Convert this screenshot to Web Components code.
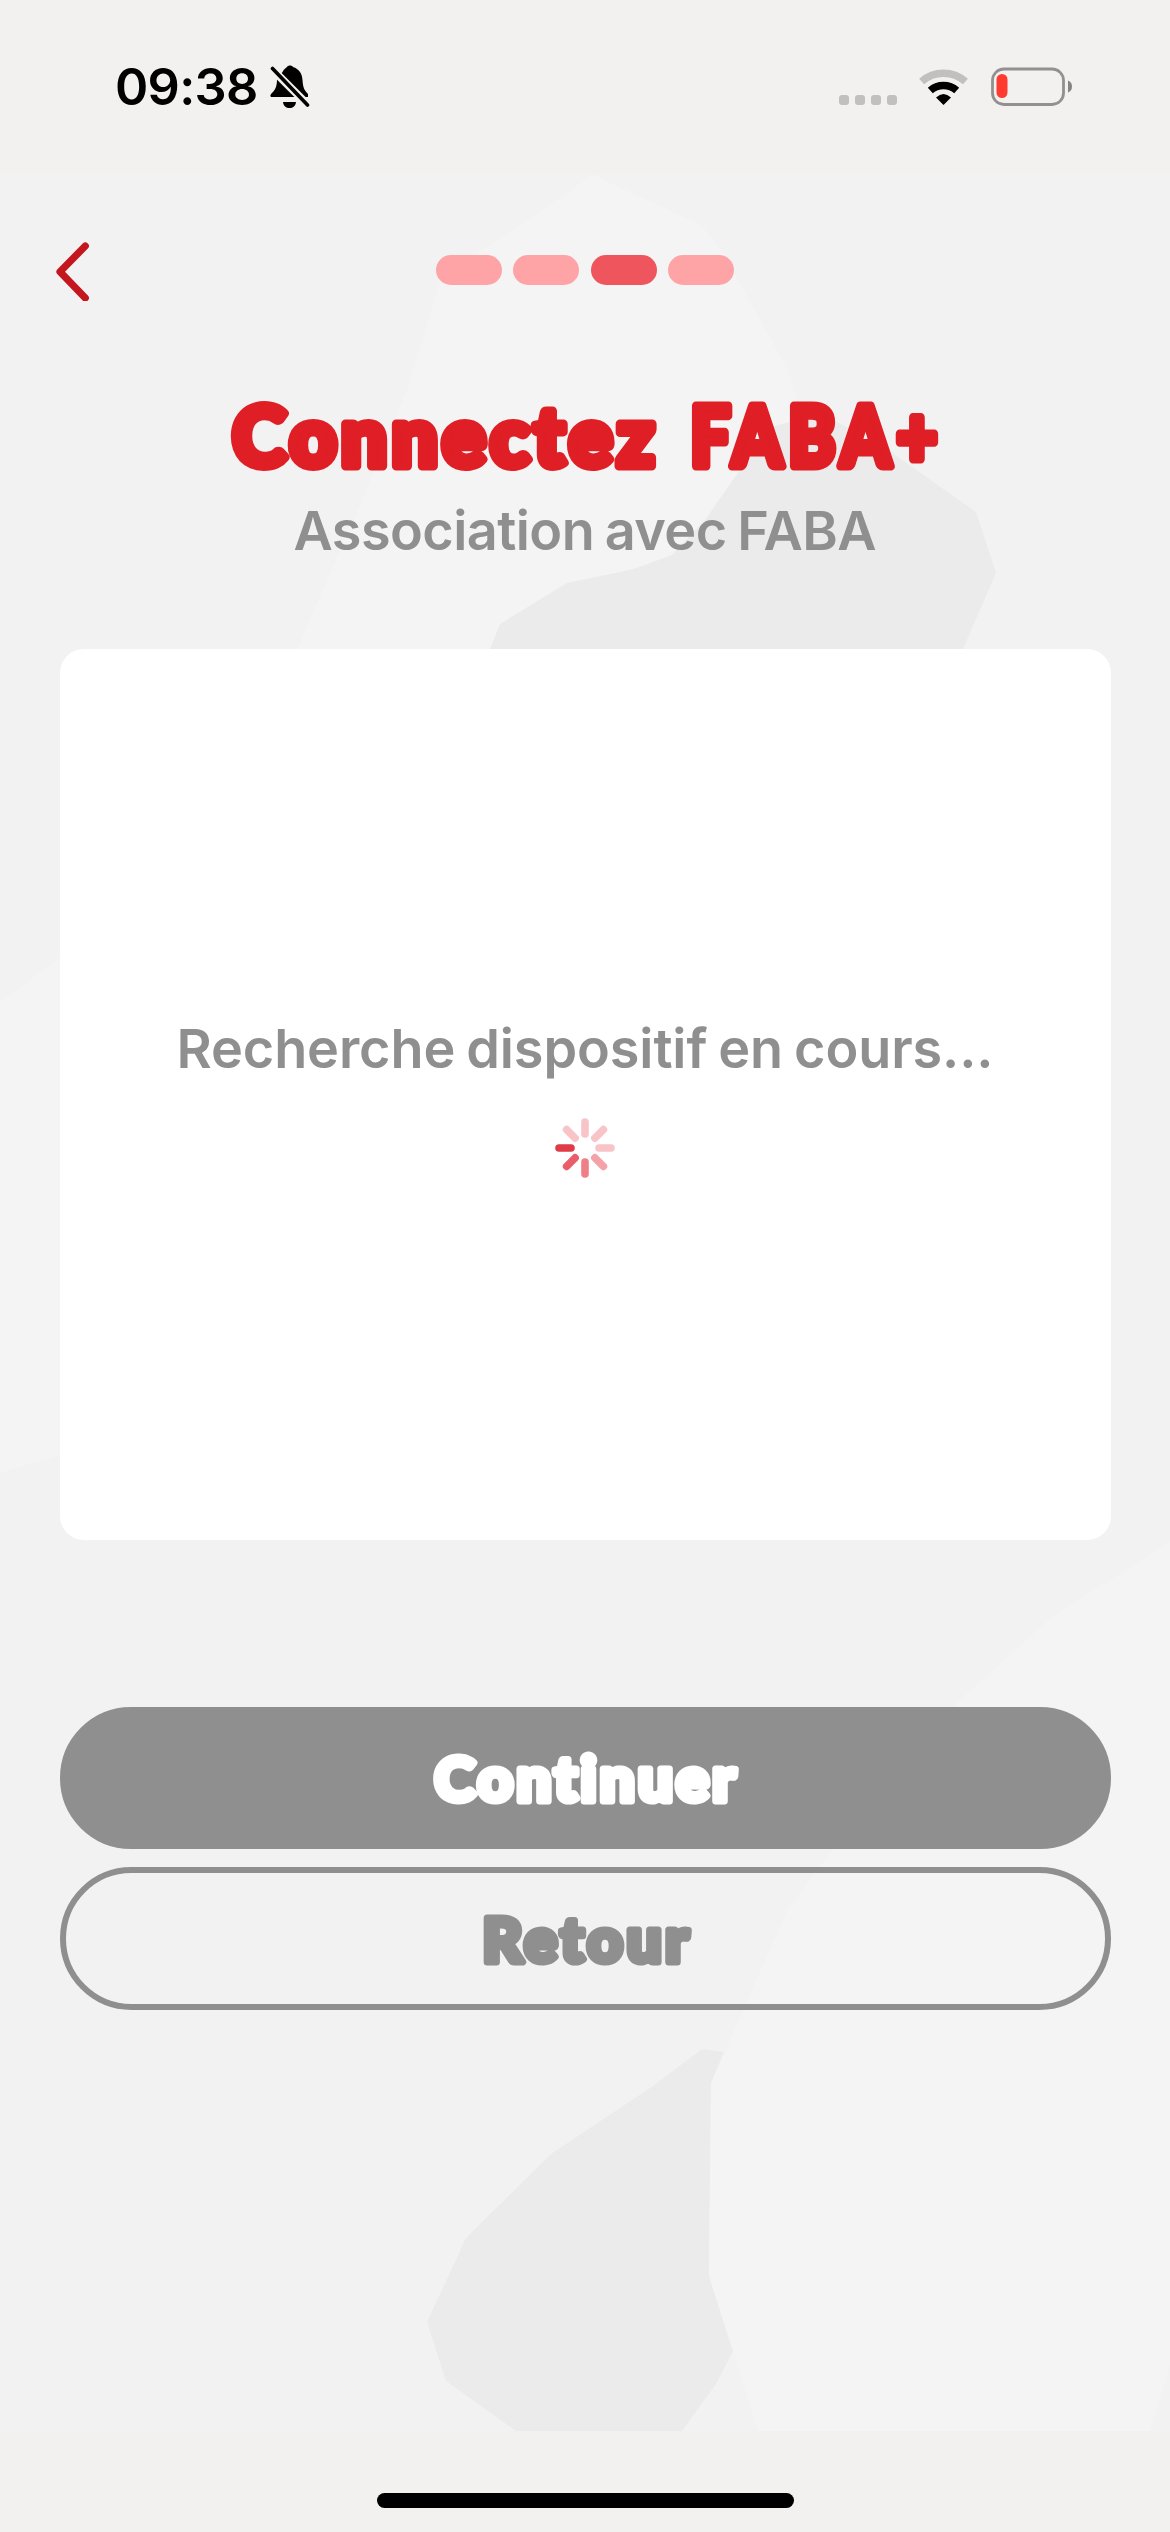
<!DOCTYPE html>
<html lang="fr">
<head>
<meta charset="utf-8">
<title>Connectez FABA+</title>
<style>
html,body{margin:0;padding:0}
body{width:1170px;height:2532px;overflow:hidden;font-family:Inter,"Liberation Sans",sans-serif}
</style>
</head>
<body>
<faba-screen>
  <status-bar slot="top" time="09:38"></status-bar>
  <nav-row current="3" total="4"></nav-row>
  <faba-title widths="431,256" squeeze="1,.87">Connectez FABA+</faba-title>
  <fit-text fit="583" class="sub">Association avec FABA</fit-text>
  <search-card><fit-text fit="817">Recherche dispositif en cours...</fit-text></search-card>
  <pill-button kind="solid" width="308">Continuer</pill-button>
  <pill-button kind="outline" width="213">Retour</pill-button>
  <home-bar slot="bottom"></home-bar>
</faba-screen>
<script>
const define=(name,html,setup)=>customElements.define(name,class extends HTMLElement{
  connectedCallback(){
    if(this.shadowRoot)return;
    const r=this.attachShadow({mode:'open'});
    r.innerHTML=typeof html==='function'?html(this):html;
    if(setup)setup(this,r);
  }
});

define('faba-screen',`<style>
:host{display:flex;flex-direction:column;width:1170px;height:2532px;background:#f2f1ef}
main{position:relative;isolation:isolate;flex:1;display:flex;flex-direction:column;align-items:center;background:#f2f2f2;overflow:hidden}
svg{position:absolute;inset:0;z-index:-1}
</style>
<slot name="top"></slot>
<main>
<svg width="1170" height="2257" viewBox="0 174 1170 2257">
<path fill="#f4f4f4" d="M593 175L478 253L439 285L407 390L358 510L297 649L240 800H900L797 397L784 363L724 255L701 225Z"/>
<path fill="#ebebeb" d="M821 413L888 450L976 512L996 573L963 649L900 760H480L490 649L500 624L567 583L634 569L672 555L705 520L735 477L772 427Z"/>
<path fill="#f4f4f4" d="M0 1002L60 957V1455L0 1473Z"/>
<path fill="#ebebeb" d="M702 2049L724 2052L711 2083L709 2276L733 2351L716 2384L682 2431H516L446 2381L427 2322L466 2238L551 2154L653 2086Z"/>
<path fill="#f4f4f4" d="M1170 1541L1050 1619L960 1700L828 1855L787 1911L711 2083L709 2276L733 2351L758 2431H1150L1170 2365Z"/>
</svg>
<slot></slot>
</main>
<slot name="bottom"></slot>`);

define('status-bar',el=>`<style>
:host{display:flex;height:174px;flex:none;justify-content:space-between;box-sizing:border-box;padding:56px 98px 0 115px}
.l,.r{display:flex;height:62px;align-items:center}
time{font:600 50.500px/64px Inter,sans-serif;letter-spacing:-.7px;width:155px;white-space:nowrap}
svg{display:block}
</style>
<div class="l"><time>${el.getAttribute('time')}</time>
<svg width="42" height="46" viewBox="0 0 42 46"><path d="M12.500 8C14 5 16 4 17 3C18 1 22 1 23 3C29 5 32 9 32.500 16C33 23 34 26 38 30V33H8H2C0 33 0 31 1.500 29.500C5 26 7 23 7 15Z"/><path d="M13 38H26C25.500 42 23 44 19.500 44S13.500 42 13 38Z"/><path d="M1 4L38 41" stroke="#f2f1ef" stroke-width="8"/><path d="M2.500 4.500L37.500 41" stroke="#000" stroke-width="3.600" stroke-linecap="round"/></svg></div>
<div class="r"><svg width="233" height="40" viewBox="839 67 233 40">
<g fill="#c1c0bf"><rect x="839" y="95" width="10" height="10" rx="3"/><rect x="855" y="95" width="10" height="10" rx="3"/><rect x="871" y="95" width="10" height="10" rx="3"/><rect x="887" y="95" width="10" height="10" rx="3"/></g>
<path d="M921.600 81.500A33 33 0 0 1 965.400 81.500" fill="none" stroke="#c1c0bf" stroke-width="7.500"/>
<path d="M930.300 90.500A20 20 0 0 1 956.700 90.500" fill="none" stroke="#000" stroke-width="7.500"/>
<path d="M943.500 105L936 97.500Q943.500 90.500 951 97.500Z"/>
<rect x="992.500" y="69" width="71" height="35.500" rx="11.500" fill="none" stroke="#929190" stroke-width="2.800"/>
<rect x="996.500" y="74" width="11" height="24" rx="5.500" fill="#ff3a2f"/>
<path d="M1068 80.500Q1072 82 1072 86.500T1068 92.500Z" fill="#858483"/>
</svg></div>`);

define('nav-row',el=>`<style>
:host{display:grid;grid-template-columns:1fr auto 1fr;align-items:center;align-self:stretch;height:60px;margin-top:67px;padding:0 53px}
ol{display:flex;gap:11.400px;list-style:none;margin:0;padding:0}
li{width:66px;height:30px;border-radius:15px;background:#fea4a7;margin-bottom:2px}
li.on{background:#ee555c}
svg{display:block}
</style>
<svg width="40" height="60" viewBox="0 0 40 60"><path d="M32.300 5L7 30.700L32.300 57" fill="none" stroke="#c3161d" stroke-width="7.200" stroke-linecap="round" stroke-linejoin="round"/></svg>
<ol>${Array.from({length:+el.getAttribute('total')},(_,i)=>`<li class="${i+1===+el.getAttribute('current')?'on':''}"></li>`).join('')}</ol>`);

// Chunky rounded lettering: black-weight glyphs with a round-joined outline
const roundText=(text,{width,size,stroke,tone,height,base,sq=1})=>`<svg width="${width}" height="${height}" style="display:block;overflow:visible"><text transform="scale(${sq} 1)" x="${stroke/2/sq}" y="${base}" textLength="${(width-stroke)/sq}" lengthAdjust="spacing" font-family="Lato, sans-serif" font-weight="900" font-size="${size}" style="font-variant-ligatures:none" fill="${tone}" stroke="${tone}" stroke-width="${stroke}" stroke-linejoin="round">${text}</text></svg>`;

define('faba-title',el=>{
  const w=el.getAttribute('widths').split(','),q=el.getAttribute('squeeze').split(',');
  return `<style>:host{display:flex;gap:27px;margin-top:94px}</style>`+
  el.textContent.split(' ').map((t,i)=>roundText(t,{width:+w[i],sq:+q[i],size:81,stroke:9,tone:'#df1e25',height:80,base:70.5})).join(' ');
});

define('fit-text',`<style>
:host{display:block;font:600 54px/66px Inter,"Liberation Sans",sans-serif;color:#8f8f8f;white-space:nowrap;word-spacing:-2.500px}
:host(.sub){margin-top:23px}
span{display:inline-block}
</style><span><slot></slot></span>`,(el,r)=>{
  // Spread the letters evenly over the requested line width
  const s=r.querySelector('span'),n=el.textContent.length,fit=+el.getAttribute('fit');
  const ls=(fit-s.getBoundingClientRect().width)/(n-1);
  s.style.letterSpacing=ls+'px';
  s.style.marginRight=-ls+'px';
});

define('search-card',()=>{
  const tones=['#f8c4c7','#f8c4c7','#f8c4c7','#f3a2a7','#ee7f86','#e85f69','#e03b46','#f8c4c7'];
  return `<style>
:host{display:flex;flex-direction:column;align-items:center;box-sizing:border-box;width:1051px;height:891px;border-radius:24px;background:#fff;margin-top:85px;padding-top:367px;gap:36px}
svg{display:block}
</style><slot></slot><svg width="60" height="60" viewBox="-30 -30 60 60">${tones.map((c,i)=>`<path d="M0 -14V-26" transform="rotate(${i*45})" stroke="${c}" stroke-width="7.600" stroke-linecap="round"/>`).join('')}</svg>`;
});

define('pill-button',el=>{
  const solid=el.getAttribute('kind')==='solid';
  return `<style>
:host{display:block;margin-top:${solid?167:18}px}
button{display:flex;align-items:center;justify-content:center;box-sizing:border-box;width:1051px;height:${solid?142:143}px;padding:0;border:6px solid #8f8f8f;border-radius:72px;background:${solid?'#8f8f8f':'transparent'}}
</style><button>${roundText(el.textContent,{width:+el.getAttribute('width'),size:61.5,stroke:7,tone:solid?'#fff':'#8f8f8f',height:52,base:solid?49:48.5})}</button>`;
});

define('home-bar',`<style>
:host{display:flex;flex:none;height:101px;justify-content:center;align-items:flex-start;box-sizing:border-box;padding-top:62px}
i{width:417px;height:15px;border-radius:8px;background:#000}
</style><i></i>`);
</script>
</body>
</html>
